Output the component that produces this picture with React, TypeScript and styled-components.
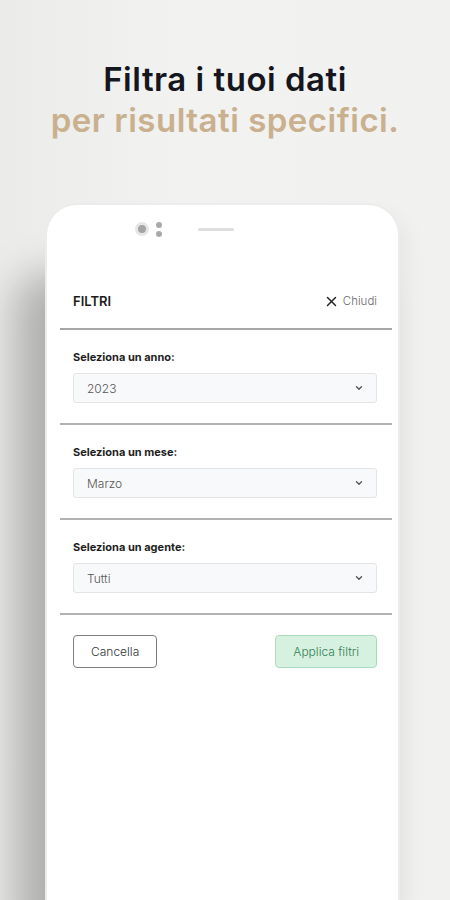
import { memo } from "react";
import styled, { createGlobalStyle } from "styled-components";

const GlobalStyle = createGlobalStyle`
  html, body {
    margin: 0;
    padding: 0;
    background: #f1f1f0;
    font-family: Inter, "Open Sans", sans-serif;
  }
  * {
    box-sizing: border-box;
  }
`;

const StyledPage = styled.div`
  width: 450px;
  height: 900px;
  overflow: hidden;
  display: flex;
  flex-flow: column;
  background: linear-gradient(90deg, #ebebea 0%, #f2f2f1 40%, #f1f1f0 100%);
`;

const StyledHeadline = styled.div`
  flex: 0 0 auto;
  padding-top: 59px;
  height: 203px;
  text-align: center;
  font-weight: 600;
  font-size: 33px;
  line-height: 41px;
  letter-spacing: 0.5px;
`;

const StyledLine = styled.div<{ $accent?: boolean }>`
  color: ${(p) => (p.$accent ? "#c9b08e" : "#141620")};
`;

const StyledPhone = styled.div`
  flex: 1 1 auto;
  margin: 0 50px 0 45px;
  background: #fff;
  border: 2px solid #ececec;
  border-bottom: 0;
  border-radius: 32px 32px 0 0;
  box-shadow: -30px 70px 40px rgba(0, 0, 0, 0.26), 10px 10px 20px rgba(0, 0, 0, 0.04);
  display: flex;
  flex-flow: column;
`;

const StyledNotch = styled.div`
  flex: 0 0 auto;
  height: 62px;
  display: flex;
  align-items: center;
  padding-left: 88px;
  padding-bottom: 14px;
`;

const StyledCamera = styled.div`
  width: 14px;
  height: 14px;
  border-radius: 50%;
  background: #a4a4a4;
  border: 3px solid #e6e6e6;
`;

const StyledDots = styled.div`
  margin-left: 7px;
  display: flex;
  flex-flow: column;
  gap: 3px;
`;

const StyledDot = styled.div`
  width: 6px;
  height: 6px;
  border-radius: 50%;
  background: #a9a9a9;
`;

const StyledSpeaker = styled.div`
  margin-left: 36px;
  width: 36px;
  height: 3px;
  border-radius: 2px;
  background: #dedede;
`;

const StyledScreen = styled.div`
  flex: 1 1 auto;
  padding: 0 6px 0 13px;
  display: flex;
  flex-flow: column;
`;

const StyledHeader = styled.div`
  height: 63px;
  padding: 7px 15px 0 13px;
  display: flex;
  align-items: center;
  justify-content: space-between;
  border-bottom: 2px solid #a6a6a6;
`;

const StyledTitle = styled.div`
  font-weight: 600;
  font-size: 13px;
  color: #1b1b1b;
`;

const StyledClose = styled.div`
  display: flex;
  align-items: center;
  gap: 6px;
  font-size: 11.5px;
  font-weight: 300;
  color: #666;
`;

const StyledSection = styled.div`
  padding: 20px 15px 20px 13px;
  display: flex;
  flex-flow: column;
  gap: 9px;
  border-bottom: 2px solid #b2b2b2;
`;

const StyledLabel = styled.div`
  font-weight: 700;
  font-size: 11px;
  color: #1e1e1e;
`;

const StyledSelect = styled.div`
  height: 30px;
  padding: 0 12px 0 13px;
  display: flex;
  align-items: center;
  justify-content: space-between;
  background: #f8f9fa;
  border: 1px solid #e3e4e6;
  border-radius: 3px;
  font-size: 12px;
  font-weight: 300;
  color: #555;
`;

const StyledActions = styled.div`
  padding: 20px 15px 20px 13px;
  display: flex;
  justify-content: space-between;
`;

const StyledButton = styled.button<{ $primary?: boolean }>`
  height: 33px;
  padding: 0 17px;
  font-family: Inter, sans-serif;
  font-size: 12px;
  font-weight: 300;
  border-radius: 4px;
  cursor: pointer;
  background: ${(p) => (p.$primary ? "#d7f1e1" : "#fff")};
  border: 1px solid ${(p) => (p.$primary ? "#a9dcbd" : "#7d7d7d")};
  color: ${(p) => (p.$primary ? "#2f7f51" : "#333")};
`;

const Chevron = () => (
  <svg width="10" height="10" viewBox="0 0 10 10" fill="none">
    <path d="M2.5 3.8 5 6.2 7.5 3.8" stroke="#555" strokeWidth="1.4" strokeLinecap="round" strokeLinejoin="round" />
  </svg>
);

const Cross = () => (
  <svg width="11" height="11" viewBox="0 0 11 11" fill="none">
    <path d="M1.5 1.5 9.5 9.5M9.5 1.5 1.5 9.5" stroke="#222" strokeWidth="1.5" strokeLinecap="round" />
  </svg>
);

const filters = [
  { label: "Seleziona un anno:", value: "2023" },
  { label: "Seleziona un mese:", value: "Marzo" },
  { label: "Seleziona un agente:", value: "Tutti" },
];

const App = memo(() => (
  <>
    <GlobalStyle />
    <StyledPage>
      <StyledHeadline>
        <StyledLine>Filtra i tuoi dati</StyledLine>
        <StyledLine $accent>per risultati specifici.</StyledLine>
      </StyledHeadline>
      <StyledPhone>
        <StyledNotch>
          <StyledCamera />
          <StyledDots>
            <StyledDot />
            <StyledDot />
          </StyledDots>
          <StyledSpeaker />
        </StyledNotch>
        <StyledScreen>
          <StyledHeader>
            <StyledTitle>FILTRI</StyledTitle>
            <StyledClose>
              <Cross />
              Chiudi
            </StyledClose>
          </StyledHeader>
          {filters.map((f) => (
            <StyledSection key={f.label}>
              <StyledLabel>{f.label}</StyledLabel>
              <StyledSelect>
                {f.value}
                <Chevron />
              </StyledSelect>
            </StyledSection>
          ))}
          <StyledActions>
            <StyledButton>Cancella</StyledButton>
            <StyledButton $primary>Applica filtri</StyledButton>
          </StyledActions>
        </StyledScreen>
      </StyledPhone>
    </StyledPage>
  </>
));

export default App;
